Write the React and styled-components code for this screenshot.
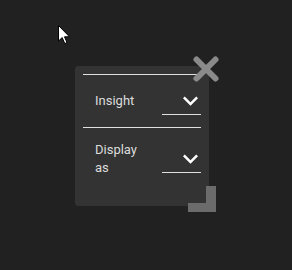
import styled, { createGlobalStyle } from 'styled-components'

const GlobalStyle = createGlobalStyle`
  html, body {
    margin: 0;
    padding: 0;
    background: #212121;
    font-family: Roboto, "Liberation Sans", sans-serif;
  }
`

function Chevron() {
  return (
    <svg width="15" height="10" viewBox="6 8.2 12 8">
      <path d="M16.59 8.59L12 13.17 7.41 8.59 6 10l6 6 6-6z" fill="#fff" />
    </svg>
  )
}

function Cursor() {
  return (
    <CursorSvg width="13" height="20" viewBox="0 0 13 20">
      <path
        d="M0.5 0.5 L0.5 16 L4.2 12.6 L6.8 18.6 L9 17.6 L6.5 11.8 L11.5 11.8 Z"
        fill="#fff"
        stroke="#000"
        strokeWidth="1"
        strokeLinejoin="miter"
      />
    </CursorSvg>
  )
}

function App() {
  return (
    <Page>
      <GlobalStyle />
      <Cursor />
      <Panel>
        <CloseButton>
          <svg width="28" height="28" viewBox="0 0 28 28">
            <path
              d="M4.5 4.5 L23.5 23.5 M23.5 4.5 L4.5 23.5"
              stroke="#8a8a8a"
              strokeWidth="6"
              strokeLinecap="round"
            />
          </svg>
        </CloseButton>
        <Divider />
        <Row>
          <Label>Insight</Label>
          <Select>
            <Chevron />
          </Select>
        </Row>
        <Divider />
        <Row $top={13}>
          <Label>Display as</Label>
          <Select>
            <Chevron />
          </Select>
        </Row>
        <ResizeHandle />
      </Panel>
    </Page>
  )
}

const Page = styled.div`
  position: relative;
  width: 292px;
  height: 270px;
  padding: 66px 0 0 75px;
  box-sizing: border-box;
`

const CursorSvg = styled.svg`
  position: absolute;
  left: 58px;
  top: 25px;
`

const Panel = styled.div`
  position: relative;
  width: 134px;
  height: 140px;
  box-sizing: border-box;
  padding: 8px 8px 0;
  background: #333333;
  border-radius: 3px;
`

const Divider = styled.div`
  height: 1px;
  background: #e0e0e0;
`

const Row = styled.div`
  display: flex;
  align-items: center;
  padding: ${(p) => p.$top || 12}px 0 12px;
`

const Label = styled.div`
  width: 52px;
  margin-left: 12px;
  font-size: 13px;
  line-height: 18px;
  color: #dcdcdc;
`

const Select = styled.div`
  margin-left: auto;
  width: 39px;
  height: 28px;
  box-sizing: border-box;
  border-bottom: 1px solid #e0e0e0;
  display: flex;
  align-items: center;
  justify-content: flex-end;
  padding-right: 3px;
`

const CloseButton = styled.div`
  position: absolute;
  top: -11px;
  right: -11px;
  width: 28px;
  height: 28px;
`

const ResizeHandle = styled.div`
  position: absolute;
  right: -7px;
  bottom: -6px;
  width: 28px;
  height: 26px;
  box-sizing: border-box;
  border-right: 10px solid #6b6b6b;
  border-bottom: 9px solid #6b6b6b;
`

export default App
